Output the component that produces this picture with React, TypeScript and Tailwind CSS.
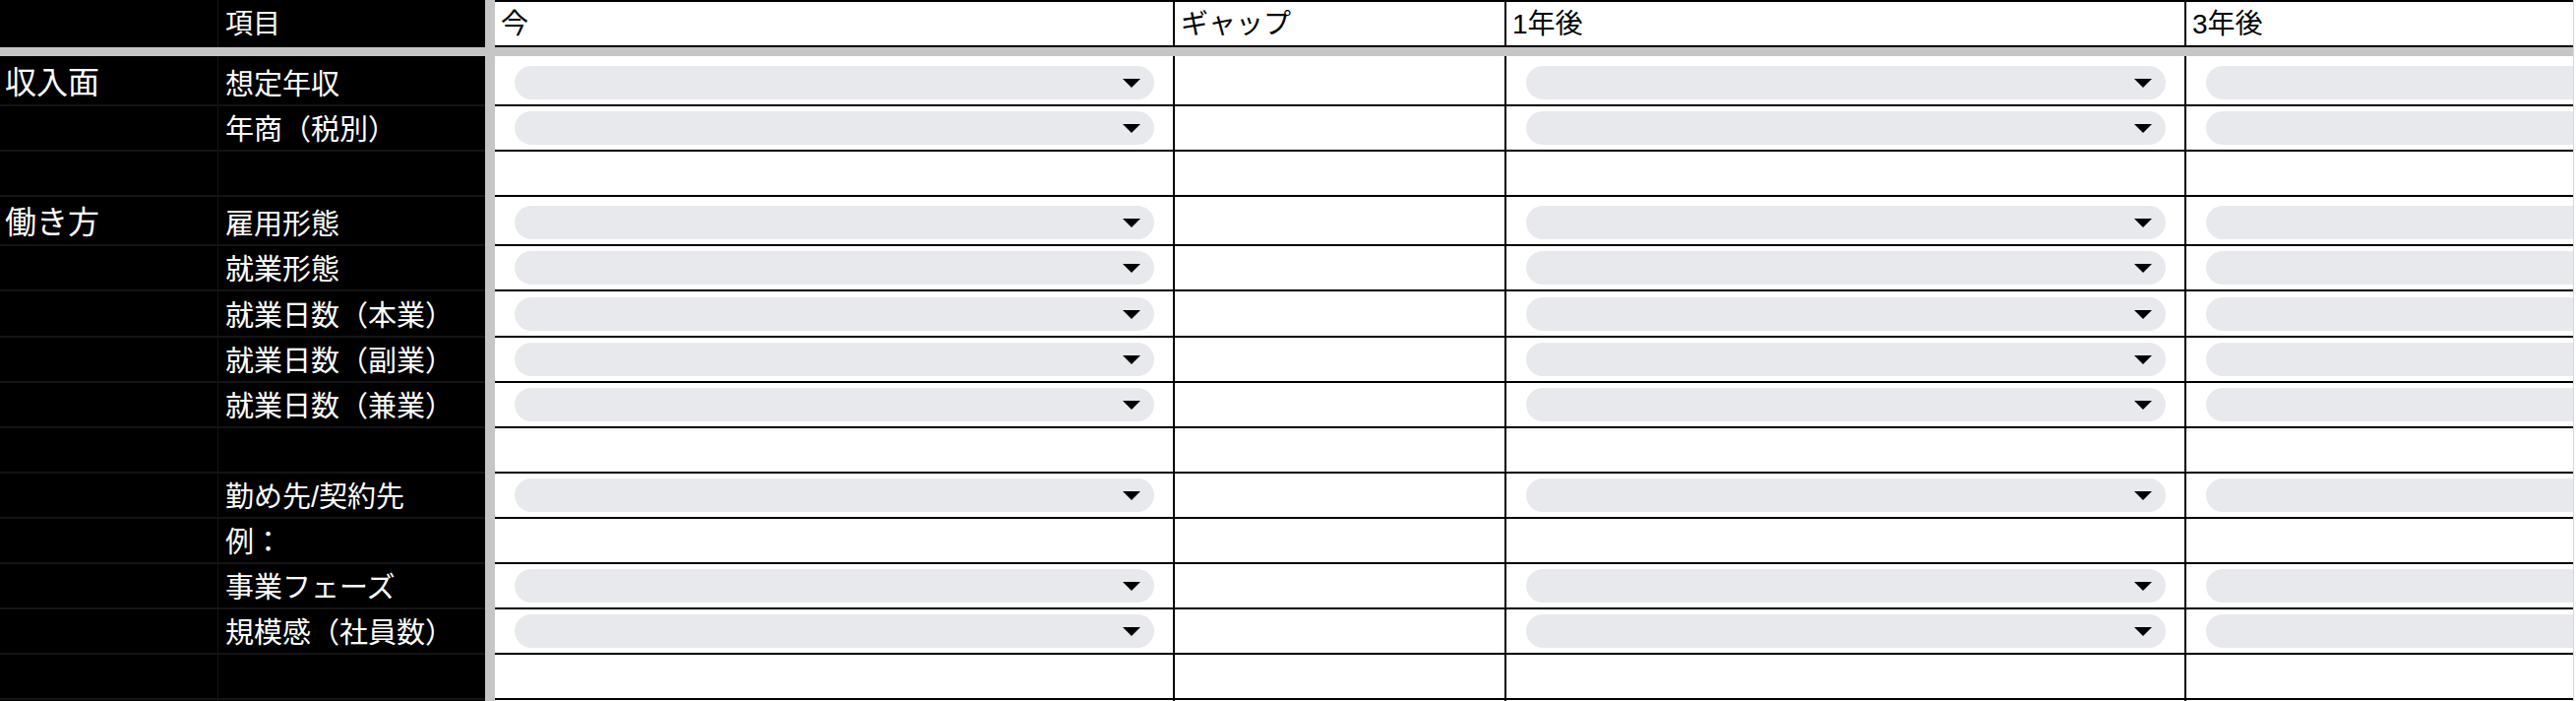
import React from "react";

type Row = {
  a?: string;
  b?: string;
  dd?: boolean;
  h: number;
};

// 行の高さは下罫線 2px を含む
const rows: Row[] = [
  { a: "収入面", b: "想定年収", dd: true, h: 51 },
  { b: "年商（税別）", dd: true, h: 46 },
  { h: 46 },
  { a: "働き方", b: "雇用形態", dd: true, h: 50 },
  { b: "就業形態", dd: true, h: 46 },
  { b: "就業日数（本業）", dd: true, h: 47 },
  { b: "就業日数（副業）", dd: true, h: 46 },
  { b: "就業日数（兼業）", dd: true, h: 46 },
  { h: 46 },
  { b: "勤め先/契約先", dd: true, h: 46 },
  { b: "例：", h: 46 },
  { b: "事業フェーズ", dd: true, h: 46 },
  { b: "規模感（社員数）", dd: true, h: 46 },
  { h: 46 },
  { h: 46 },
];

function Chip() {
  return (
    <div className="flex h-[34px] w-full items-center justify-end rounded-full bg-[#e8e9ec] pr-[14px]">
      <svg width="18" height="9" viewBox="0 0 18 9">
        <polygon points="0,0 18,0 9,9" fill="#000" />
      </svg>
    </div>
  );
}

function DataCell({ w, dd }: { w: string; dd?: boolean }) {
  return (
    <div className={`${w} flex shrink-0 items-end border-b-2 border-r-2 border-black bg-white pb-[5px] pl-[20px] pr-[19px]`}>
      {dd && <Chip />}
    </div>
  );
}

export default function App() {
  return (
    <div className="flex h-[712px] w-[2618px] overflow-hidden bg-white font-['Liberation_Sans','Noto_Sans_CJK_JP',sans-serif]">
      <div className="flex w-[2615px] shrink-0 flex-col overflow-hidden">
        {/* ヘッダー行 */}
        <div className="flex h-[48px] shrink-0">
          <div className="w-[222px] shrink-0 border-r border-[#161616] bg-black" />
          <div className="flex w-[271px] shrink-0 items-end bg-black pb-[9px] pl-[7px] text-[28px] leading-none text-white">
            項目
          </div>
          <div className="w-[10px] shrink-0 bg-[#c6c6c6]" />
          {[
            { t: "今", w: "w-[691px]" },
            { t: "ギャップ", w: "w-[337px]" },
            { t: "1年後", w: "w-[691px]" },
            { t: "3年後", w: "w-[691px]" },
          ].map((c) => (
            <div
              key={c.t}
              className={`${c.w} flex shrink-0 items-end border-y-2 border-r-2 border-black bg-white pb-[7px] pl-[6px] text-[28px] leading-none text-black`}
            >
              {c.t}
            </div>
          ))}
        </div>

        {/* 固定行の区切り */}
        <div className="h-[9px] shrink-0 bg-[#c6c6c6]" />

        {rows.map((r, i) => (
          <div key={i} className="flex shrink-0" style={{ height: r.h }}>
            <div className="flex w-[222px] shrink-0 items-end border-b-2 border-r border-[#141414] bg-black pb-[6px] pl-[5px] text-[32px] leading-none text-white">
              {r.a}
            </div>
            <div className="flex w-[271px] shrink-0 items-end border-b-2 border-[#141414] bg-black pb-[5px] pl-[7px] text-[29px] leading-none text-white">
              {r.b}
            </div>
            <div className="w-[10px] shrink-0 bg-[#c6c6c6]" />
            <DataCell w="w-[691px]" dd={r.dd} />
            <DataCell w="w-[337px]" />
            <DataCell w="w-[691px]" dd={r.dd} />
            <DataCell w="w-[691px]" dd={r.dd} />
          </div>
        ))}
      </div>
      <div className="w-[3px] shrink-0 border-l border-[#d8d8d8] bg-white" />
    </div>
  );
}
